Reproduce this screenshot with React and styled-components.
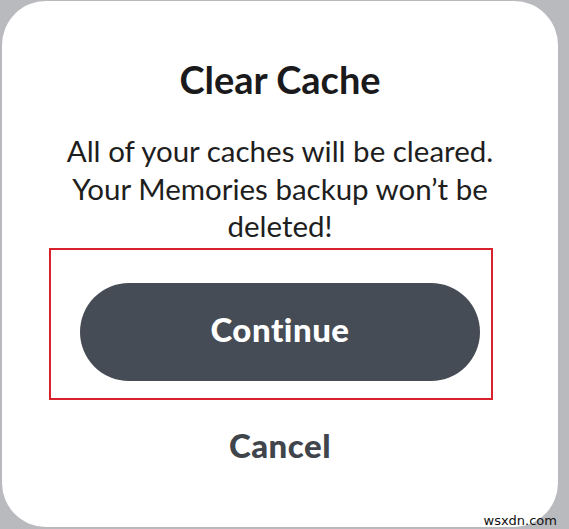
import styled, { createGlobalStyle } from "styled-components"

const GlobalStyle = createGlobalStyle`
    html, body {
        margin: 0;
        padding: 0;
        background: #b9babd;
    }
    body {
        font-family: Lato, "Open Sans", sans-serif;
    }
`

const Page = styled.div`
    position: relative;
    width: 569px;
    height: 529px;
    overflow: hidden;
    padding: 1px 11px 2px 2px;
    box-sizing: border-box;
`

const Card = styled.div`
    height: 100%;
    background: #ffffff;
    border-radius: 44px;
    display: flex;
    flex-direction: column;
    align-items: center;
    padding-top: 57px;
    box-sizing: border-box;
`

const Titre = styled.h2`
    margin: 0;
    font-size: 38px;
    font-weight: 700;
    color: #1a1a1c;
    line-height: 42px;
`

const Message = styled.p`
    margin: 32px 0 0;
    width: 460px;
    text-align: center;
    font-size: 29.5px;
    line-height: 37.5px;
    color: #1e1e20;
`

const Zone = styled.div`
    position: relative;
    margin-top: 38px;
`

const Encadre = styled.div`
    position: absolute;
    top: -35px;
    left: -31px;
    right: -13px;
    bottom: -19px;
    border: 2.5px solid #d7222c;
    pointer-events: none;
`

const Bouton = styled.button`
    width: 400px;
    height: 98px;
    padding: 0 0 5px;
    border: none;
    border-radius: 49px;
    background: #464c55;
    color: #ffffff;
    font-family: Lato, "Open Sans", sans-serif;
    font-size: 33px;
    font-weight: 900;
    letter-spacing: 0.5px;
    cursor: pointer;
`

const Annuler = styled.span`
    margin-top: 45px;
    font-size: 33px;
    font-weight: 900;
    letter-spacing: 0.5px;
    color: #40454c;
    line-height: 38px;
`

const Filigrane = styled.span`
    position: absolute;
    right: 12px;
    bottom: 1px;
    font-family: "DejaVu Sans", sans-serif;
    font-size: 13px;
    color: #111111;
`

function App() {
    return (
        <>
            <GlobalStyle />
            <Page>
                <Card>
                    <Titre>Clear Cache</Titre>
                    <Message>
                        All of your caches will be cleared. Your Memories
                        backup won’t be deleted!
                    </Message>
                    <Zone>
                        <Bouton>Continue</Bouton>
                        <Encadre />
                    </Zone>
                    <Annuler>Cancel</Annuler>
                </Card>
                <Filigrane>wsxdn.com</Filigrane>
            </Page>
        </>
    )
}

export default App
